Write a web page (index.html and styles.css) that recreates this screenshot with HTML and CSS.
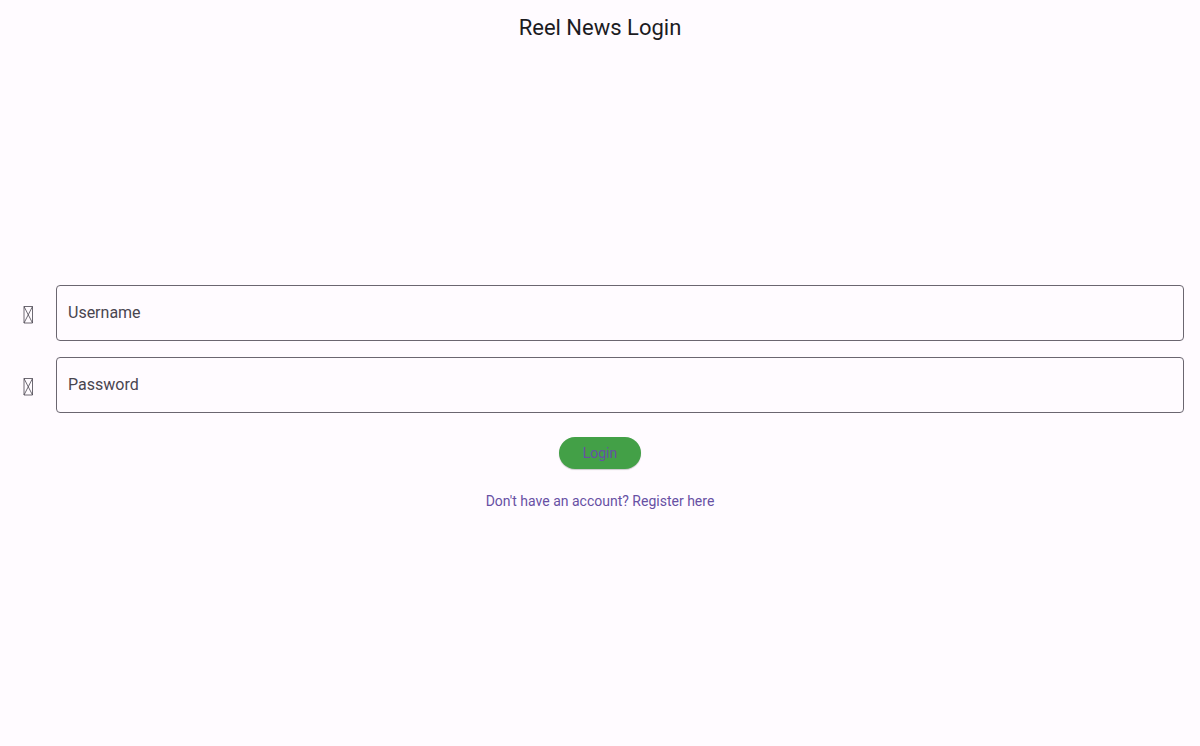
FILE: index.html
```html
<!DOCTYPE html>
<html lang="en">
<head>
<meta charset="utf-8">
<meta name="viewport" content="width=device-width, initial-scale=1">
<title>Reel News Login</title>
<link rel="stylesheet" href="styles.css">
</head>
<body>
<header class="app-bar">
  <h1 class="app-title">Reel News Login</h1>
</header>
<main class="content">
  <form class="login-form">
    <div class="field-row">
      <svg class="field-icon" viewBox="0 0 24 24" aria-hidden="true"><path d="M8 5.5h8.5v16.500H8zM8 5.500l8.500 16.500M16.500 5.500L8 22"/></svg>
      <div class="field">
        <input class="field-input" id="username" type="text" placeholder=" " autocomplete="username">
        <label class="field-label" for="username">Username</label>
      </div>
    </div>
    <div class="field-row">
      <svg class="field-icon" viewBox="0 0 24 24" aria-hidden="true"><path d="M8 5.500h8.500v16.500H8zM8 5.500l8.500 16.500M16.500 5.500L8 22"/></svg>
      <div class="field">
        <input class="field-input" id="password" type="password" placeholder=" " autocomplete="current-password">
        <label class="field-label" for="password">Password</label>
      </div>
    </div>
    <div class="actions">
      <button class="login-button" type="submit">Login</button>
      <a class="register-link" href="#register">Don't have an account? Register here</a>
    </div>
  </form>
</main>
</body>
</html>
```

FILE: styles.css
```css
* {
  box-sizing: border-box;
}

body {
  display: flex;
  flex-direction: column;
  min-height: 100vh;
  margin: 0;
  background: #fffbff;
  color: #1c1b1f;
  font-family: Roboto, "Liberation Sans", sans-serif;
}

.app-bar {
  display: flex;
  align-items: center;
  justify-content: center;
  height: 56px;
}

.app-title {
  margin: 0;
  font-size: 22px;
  font-weight: 400;
  line-height: 28px;
}

.content {
  display: flex;
  flex: 1;
  flex-direction: column;
  justify-content: center;
  padding: 0 16px;
}

.login-form {
  display: flex;
  flex-direction: column;
  gap: 16px;
}

.field-row {
  display: flex;
  align-items: center;
  gap: 16px;
}

.field-icon {
  flex: none;
  width: 24px;
  height: 24px;
  fill: none;
  stroke: #49454f;
  stroke-width: 0.8;
}

.field {
  position: relative;
  flex: 1;
}

.field-input {
  display: block;
  width: 100%;
  height: 56px;
  padding: 0 12px;
  border: 1px solid #6b6670;
  border-radius: 4px;
  background: transparent;
  color: #1c1b1f;
  font: 16px/24px Roboto, "Liberation Sans", sans-serif;
}

.field-label {
  position: absolute;
  top: 16px;
  left: 12px;
  color: #49454f;
  font-size: 16px;
  line-height: 24px;
  pointer-events: none;
}

.field-input:not(:placeholder-shown) + .field-label {
  top: -8px;
  padding: 0 4px;
  background: #fffbff;
  font-size: 12px;
  line-height: 16px;
}

.actions {
  display: flex;
  flex-direction: column;
  align-items: center;
  gap: 16px;
  padding-top: 8px;
}

.login-button,
.register-link {
  font-family: inherit;
  font-size: 14px;
  line-height: 20px;
  color: #6750a4;
}

.login-button {
  height: 32px;
  padding: 0 24px;
  border: 0;
  border-radius: 16px;
  background: #43a047;
  box-shadow: 0 1px 1px rgba(0, 0, 0, 0.2);
  cursor: pointer;
}

.register-link {
  padding: 6px 12px;
  text-decoration: none;
}
```
